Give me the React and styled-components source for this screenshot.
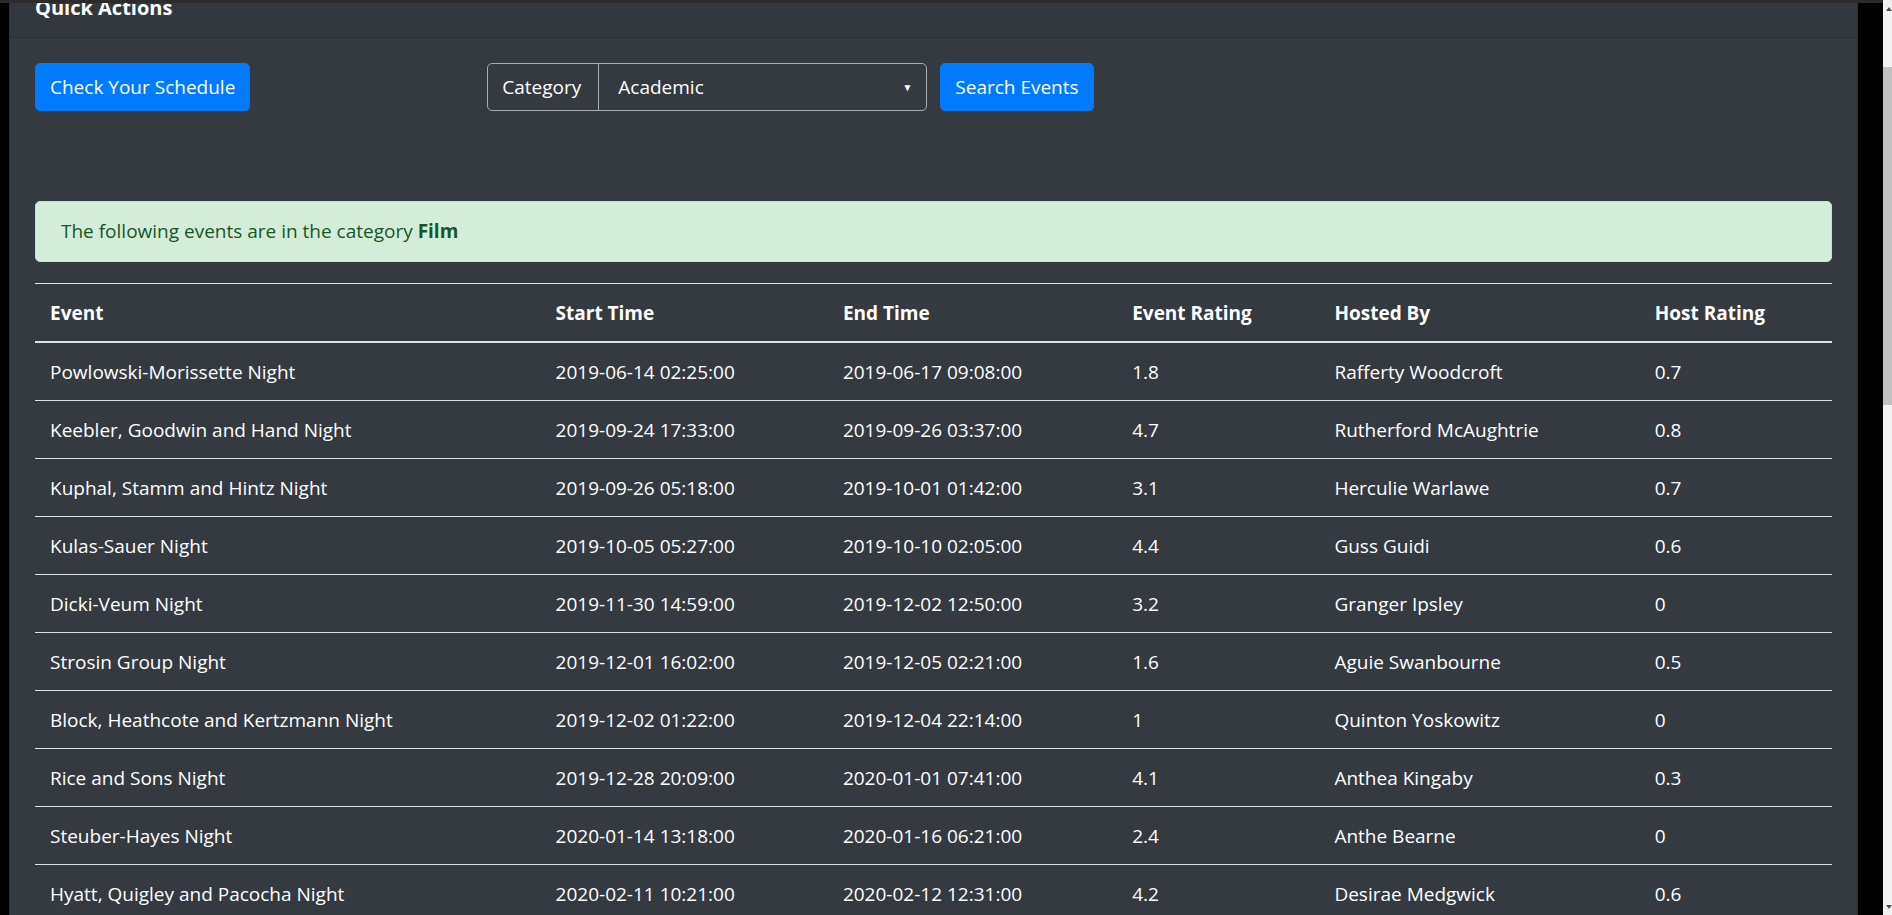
import React from 'react'
import styled, { createGlobalStyle } from 'styled-components'

const GlobalStyle = createGlobalStyle`
    html, body {
        margin: 0;
        padding: 0;
        height: 100%;
        overflow: hidden;
        background: #000;
    }
    body {
        font-family: "Open Sans", "Noto Sans", sans-serif;
        color: #fff;
    }
`

const Frame = styled.div`
    display: flex;
    height: 100vh;
`

const Viewport = styled.div`
    flex: 1;
    display: flex;
    flex-direction: column;
    min-width: 0;
`

const TopStrip = styled.div`
    height: 3px;
    flex-shrink: 0;
    background: #2b2b2b;
`

const Stage = styled.div`
    flex: 1;
    display: flex;
    min-height: 0;
`

const Gutter = styled.div`
    width: ${p => p.$w}px;
    flex-shrink: 0;
    background: #000;
`

const Card = styled.div`
    flex: 1;
    background: #343a40;
    overflow: hidden;
    border-left: 1px solid #2d3238;
    border-right: 1px solid #2d3238;
`

const CardHeader = styled.div`
    height: 34px;
    padding: 0 25px;
    overflow: hidden;
    background: #32383e;
    border-bottom: 1px solid #2a2f34;
`

const Title = styled.h5`
    margin: -7px 0 0;
    font-size: 20px;
    line-height: 24px;
    font-weight: 700;
`

const CardBody = styled.div`
    padding: 25px;
`

const Actions = styled.div`
    display: flex;
    align-items: center;
`

const Button = styled.button`
    height: 48px;
    padding: 0 14px;
    margin-left: ${p => p.$ml || 0}px;
    border: 1px solid #007bff;
    border-radius: 5px;
    background: #007bff;
    color: #fff;
    font-family: inherit;
    font-size: 19px;
    line-height: 1;
`

const InputGroup = styled.div`
    display: flex;
    width: 440px;
    height: 48px;
    margin-left: 237px;
    border: 1px solid #a9aeb3;
    border-radius: 5px;
    box-sizing: border-box;
`

const Addon = styled.div`
    display: flex;
    align-items: center;
    padding: 0 17px 0 14px;
    border-right: 1px solid #a9aeb3;
    font-size: 19px;
`

const Select = styled.div`
    flex: 1;
    display: flex;
    align-items: center;
    padding: 0 14px 0 19px;
    font-size: 19px;
`

const Caret = styled.span`
    margin-left: auto;
    font-size: 10px;
`

const Alert = styled.div`
    margin-top: 90px;
    padding: 14px 25px;
    border: 1px solid #c3e6cb;
    border-radius: 5px;
    background: #d4edda;
    color: #155724;
    font-size: 19px;
    line-height: 31px;

    b {
        font-weight: 700;
    }
`

const Table = styled.table`
    width: 100%;
    margin-top: 21px;
    border-collapse: collapse;
    table-layout: fixed;
    font-size: 19px;
    line-height: 29px;
    border-top: 1px solid #dee2e6;
`

const Th = styled.th`
    padding: 15px 15px 13px;
    text-align: left;
    font-weight: 700;
    border-bottom: 2px solid #dee2e6;
`

const Td = styled.td`
    padding: 15px 15px 13px;
    border-bottom: 1px solid #dee2e6;
    white-space: nowrap;
`

const Scrollbar = styled.div`
    width: 9px;
    flex-shrink: 0;
    background: #f1f1f1;
    display: flex;
    flex-direction: column;
    align-items: flex-end;
`

const Arrow = styled.div`
    height: 17px;
    width: 9px;
    flex-shrink: 0;
    display: flex;
    align-items: center;
    justify-content: flex-end;
`

const Thumb = styled.div`
    width: 100%;
    height: 338px;
    flex-shrink: 0;
    margin-top: 50px;
    background: #c1c1c1;
`

const Spacer = styled.div`
    flex: 1;
`

const columns = [
    { title: 'Event', width: 505 },
    { title: 'Start Time', width: 287 },
    { title: 'End Time', width: 289 },
    { title: 'Event Rating', width: 202 },
    { title: 'Hosted By', width: 320 },
    { title: 'Host Rating', width: 192 },
]

const events = [
    ['Powlowski-Morissette Night', '2019-06-14 02:25:00', '2019-06-17 09:08:00', '1.8', 'Rafferty Woodcroft', '0.7'],
    ['Keebler, Goodwin and Hand Night', '2019-09-24 17:33:00', '2019-09-26 03:37:00', '4.7', 'Rutherford McAughtrie', '0.8'],
    ['Kuphal, Stamm and Hintz Night', '2019-09-26 05:18:00', '2019-10-01 01:42:00', '3.1', 'Herculie Warlawe', '0.7'],
    ['Kulas-Sauer Night', '2019-10-05 05:27:00', '2019-10-10 02:05:00', '4.4', 'Guss Guidi', '0.6'],
    ['Dicki-Veum Night', '2019-11-30 14:59:00', '2019-12-02 12:50:00', '3.2', 'Granger Ipsley', '0'],
    ['Strosin Group Night', '2019-12-01 16:02:00', '2019-12-05 02:21:00', '1.6', 'Aguie Swanbourne', '0.5'],
    ['Block, Heathcote and Kertzmann Night', '2019-12-02 01:22:00', '2019-12-04 22:14:00', '1', 'Quinton Yoskowitz', '0'],
    ['Rice and Sons Night', '2019-12-28 20:09:00', '2020-01-01 07:41:00', '4.1', 'Anthea Kingaby', '0.3'],
    ['Steuber-Hayes Night', '2020-01-14 13:18:00', '2020-01-16 06:21:00', '2.4', 'Anthe Bearne', '0'],
    ['Hyatt, Quigley and Pacocha Night', '2020-02-11 10:21:00', '2020-02-12 12:31:00', '4.2', 'Desirae Medgwick', '0.6'],
]

const Triangle = ({ down }) => (
    <svg width="6" height="4" viewBox="0 0 6 4">
        <polygon points={down ? '0,0 6,0 3,4' : '0,4 6,4 3,0'} fill="#505050" />
    </svg>
)

const App = () => {
    return (
        <>
            <GlobalStyle />
            <Frame>
                <Viewport>
                    <TopStrip />
                    <Stage>
                        <Gutter $w={9} />
                        <Card>
                            <CardHeader>
                                <Title>Quick Actions</Title>
                            </CardHeader>
                            <CardBody>
                                <Actions>
                                    <Button>Check Your Schedule</Button>
                                    <InputGroup>
                                        <Addon>Category</Addon>
                                        <Select>
                                            Academic
                                            <Caret>▼</Caret>
                                        </Select>
                                    </InputGroup>
                                    <Button $ml={13}>Search Events</Button>
                                </Actions>
                                <Alert>
                                    The following events are in the category <b>Film</b>
                                </Alert>
                                <Table>
                                    <colgroup>
                                        {columns.map(c => <col key={c.title} style={{ width: c.width }} />)}
                                    </colgroup>
                                    <thead>
                                        <tr>
                                            {columns.map(c => <Th key={c.title}>{c.title}</Th>)}
                                        </tr>
                                    </thead>
                                    <tbody>
                                        {events.map(row => (
                                            <tr key={row[0]}>
                                                {row.map((cell, i) => <Td key={i}>{cell}</Td>)}
                                            </tr>
                                        ))}
                                    </tbody>
                                </Table>
                            </CardBody>
                        </Card>
                        <Gutter $w={25} />
                    </Stage>
                </Viewport>
                <Scrollbar>
                    <Arrow><Triangle /></Arrow>
                    <Thumb />
                    <Spacer />
                    <Arrow><Triangle down /></Arrow>
                </Scrollbar>
            </Frame>
        </>
    )
}

export default App
